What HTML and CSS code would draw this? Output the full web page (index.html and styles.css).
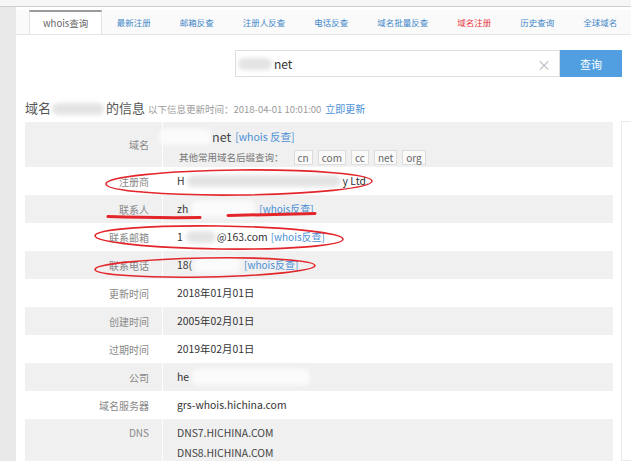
FILE: index.html
```html
<!DOCTYPE html>
<html lang="zh">
<head>
<meta charset="utf-8">
<title>whois查询</title>
<link rel="stylesheet" href="styles.css">
</head>
<body>
<div class="topbar"></div>
<div class="frame">
  <aside class="side"></aside>
  <main class="main">
    <nav class="tabs">
      <a class="tab active">whois查询</a>
      <a class="tab">最新注册</a>
      <a class="tab">邮箱反查</a>
      <a class="tab">注册人反查</a>
      <a class="tab">电话反查</a>
      <a class="tab">域名批量反查</a>
      <a class="tab red">域名注册</a>
      <a class="tab">历史查询</a>
      <a class="tab">全球域名</a>
    </nav>
    <div class="search">
      <div class="input"><span class="redact r-search"></span><span class="q">net</span><span class="clear">×</span></div>
      <button class="btn">查询</button>
    </div>
    <div class="content">
      <section class="info">
        <h2 class="title">域名<span class="redact r-title"></span>的信息<small class="upd">以下信息更新时间：2018-04-01 10:01:00</small><a class="lk upd-lk">立即更新</a></h2>
        <div class="table">
          <div class="row alt">
            <div class="lab">域名</div>
            <div class="val dom">
              <div class="dom-line"><span class="redact light r-dom"></span><span class="dname">net</span><a class="lk small">[whois 反查]</a></div>
              <div class="sfx-line">其他常用域名后缀查询：<span class="sfx">cn</span><span class="sfx">com</span><span class="sfx">cc</span><span class="sfx">net</span><span class="sfx">org</span></div>
            </div>
          </div>
          <div class="row">
            <div class="lab">注册商</div>
            <div class="val">H<span class="redact r-reg"></span>y Ltd.</div>
          </div>
          <div class="row alt">
            <div class="lab">联系人</div>
            <div class="val">zh<span class="redact light r-con"></span><a class="lk">[whois反查]</a></div>
          </div>
          <div class="row">
            <div class="lab">联系邮箱</div>
            <div class="val">1<span class="redact r-mail"></span>@163.com<a class="lk gap">[whois反查]</a></div>
          </div>
          <div class="row alt">
            <div class="lab">联系电话</div>
            <div class="val">18(<span class="redact light r-tel"></span><a class="lk">[whois反查]</a></div>
          </div>
          <div class="row">
            <div class="lab">更新时间</div>
            <div class="val">2018年01月01日</div>
          </div>
          <div class="row alt">
            <div class="lab">创建时间</div>
            <div class="val">2005年02月01日</div>
          </div>
          <div class="row">
            <div class="lab">过期时间</div>
            <div class="val">2019年02月01日</div>
          </div>
          <div class="row alt">
            <div class="lab">公司</div>
            <div class="val">he<span class="redact light r-co"></span></div>
          </div>
          <div class="row">
            <div class="lab">域名服务器</div>
            <div class="val">grs-whois.hichina.com</div>
          </div>
          <div class="row alt dns">
            <div class="lab top">DNS</div>
            <div class="val">DNS7.HICHINA.COM<br>DNS8.HICHINA.COM</div>
          </div>
        </div>
      </section>
      <aside class="rpanel"></aside>
    </div>
  </main>
</div>
<svg class="marks" viewBox="0 0 631 461" width="631" height="461" aria-hidden="true">
  <g fill="none" stroke="#e2262b" stroke-width="1.6">
    <ellipse cx="239" cy="182.5" rx="133" ry="12.5" transform="rotate(-0.6 239 182.5)"/>
    <ellipse cx="219" cy="237.5" rx="124" ry="11.5" transform="rotate(0.8 219 237.5)"/>
    <ellipse cx="205" cy="267.5" rx="110" ry="9.5" transform="rotate(-1 205 267.5)"/>
  </g>
  <g fill="none" stroke="#e2262b" stroke-width="3" stroke-linecap="round">
    <path d="M108 216.5 Q 150 218 200 217.5"/>
    <path d="M228 215.5 Q 270 214.5 315 213.5"/>
  </g>
</svg>
</body>
</html>
```

FILE: styles.css
```css
* { box-sizing: border-box; }

html, body {
  margin: 0;
  padding: 0;
}

body {
  width: 631px;
  height: 461px;
  overflow: hidden;
  position: relative;
  background: #fff;
  font-family: "Noto Sans CJK SC", "Noto Sans", sans-serif;
  color: #333;
}

.topbar {
  height: 7px;
  background: #f6f6f6;
  border-bottom: 1px solid #cfcfcf;
}

.frame {
  display: flex;
  height: 454px;
}

.side {
  flex: none;
  width: 16px;
  background: #e9e9e9;
}

.main {
  flex: 1;
  min-width: 0;
}

/* tabs */
.tabs {
  display: flex;
  margin-top: 3px;
  height: 25px;
  padding-left: 13px;
  background: #fafafa;
  border-bottom: 1px solid #e6e6e6;
  overflow: hidden;
  white-space: nowrap;
}

.tab {
  flex: none;
  padding: 0 14.5px;
  font-size: 8.5px;
  line-height: 24px;
  color: #3f86c8;
}

.tab.active {
  padding: 0 13px;
  background: #fff;
  color: #666;
  font-size: 9.5px;
  line-height: 22px;
  border-top: 2px solid #9a9a9a;
  border-left: 1px solid #e2e2e2;
  border-right: 1px solid #e2e2e2;
  height: 25px;
}

.tab.red { color: #e8383d; }

/* search */
.search {
  display: flex;
  margin-top: 15px;
  margin-left: 219px;
  height: 27px;
}

.input {
  display: flex;
  align-items: center;
  width: 325px;
  height: 27px;
  border: 1px solid #dedede;
  padding-left: 2px;
  padding-right: 8px;
}

.q {
  font-size: 12px;
  color: #333;
}

.clear {
  margin-left: auto;
  color: #bdbdbd;
  font-size: 14px;
  line-height: 1;
}

.btn {
  width: 62px;
  height: 27px;
  border: 0;
  padding: 0;
  background: #519fe0;
  color: #fff;
  font-family: inherit;
  font-size: 11px;
}

/* content */
.content {
  display: flex;
  padding-left: 9px;
}

.info {
  flex: none;
  width: 588px;
}

.title {
  margin: 21px 0 0;
  font-size: 13px;
  line-height: 20px;
  font-weight: normal;
  color: #555;
  white-space: nowrap;
}

.upd {
  margin-left: 3px;
  font-size: 9.5px;
  color: #9a9a9a;
}

.upd-lk {
  margin-left: 4px;
  font-size: 9.5px;
}

.lk {
  color: #4a8fd6;
  font-size: 10px;
}

.lk.gap { margin-left: 3px; }

.lk.small { font-size: 10.5px; margin-left: 2px; }

.table {
  margin-top: 3px;
}

.row {
  display: grid;
  grid-template-columns: 138px 1fr;
  min-height: 28px;
  background: #fff;
}

.row.alt { background: #f0f0f0; }

.lab {
  display: flex;
  align-items: center;
  justify-content: flex-end;
  padding-right: 13px;
  border-right: 1px solid #fff;
  font-size: 10px;
  color: #888;
}

.lab.top {
  align-items: flex-start;
  padding-top: 4px;
  line-height: 20px;
}

.val {
  display: flex;
  align-items: center;
  padding: 4px 14px;
  font-size: 10.4px;
  line-height: 20px;
  color: #333;
  white-space: nowrap;
}

.dns .val {
  display: block;
  padding-top: 4px;
  color: #444;
}

.val.dom {
  display: block;
  padding: 5px 14px 0;
}

.dom-line {
  display: flex;
  align-items: center;
  height: 20px;
}

.dname {
  font-size: 12.5px;
  color: #444;
  margin-right: 2px;
}

.sfx-line {
  display: flex;
  align-items: center;
  height: 20px;
  padding-left: 2px;
  font-size: 9.5px;
  color: #777;
}

.sfx {
  margin-left: 5px;
  padding: 0 3px;
  border: 1px solid #dcdcdc;
  background: #fafafa;
  font-size: 10px;
  line-height: 13px;
  color: #666;
}

.sfx:first-child { margin-left: 10px; }

/* redacted smudges */
.redact {
  display: inline-block;
  height: 12px;
  vertical-align: middle;
  background: #e4e4e4;
  border-radius: 6px;
  filter: blur(2px);
}

.redact.light { background: #fbfbfb; height: 16px; }

.r-search { width: 34px; margin-right: 2px; }
.r-title { width: 52px; margin: 0 2px 0 1px; }
.r-dom { width: 52px; margin-left: -18px; margin-right: 1px; }
.r-reg { width: 154px; margin: 0 2px; }
.r-con { width: 64px; margin: 0 4px 0 3px; }
.r-mail { width: 30px; margin: 0 1px 0 3px; }
.r-tel { width: 46px; margin: 0 4px 0 2px; }
.r-co { width: 118px; margin-left: 3px; }

.rpanel {
  flex: 1;
  margin-left: 8px;
  margin-top: 44px;
  border: 1px solid #ebebeb;
  border-right: 0;
  height: 340px;
}

/* hand-drawn annotation overlay */
.marks {
  position: absolute;
  top: 0;
  left: 0;
  pointer-events: none;
}
```
